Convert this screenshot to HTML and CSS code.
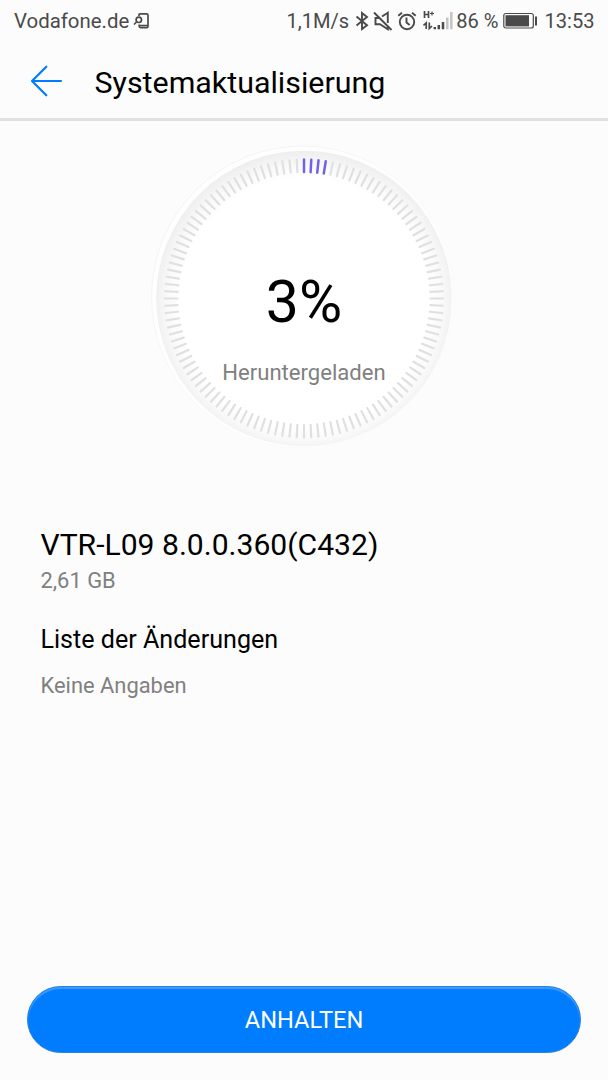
FILE: index.html
```
<!DOCTYPE html>
<html lang="de">
<head>
<meta charset="utf-8">
<title>Systemaktualisierung</title>
<link rel="stylesheet" href="styles.css">
</head>
<body>
<div class="screen">
  <div class="status">
    <div class="carrier">
      <span>Vodafone.de</span>
      <svg class="device-icon" width="17" height="18" viewBox="0 0 17 18"><path d="M6 4V2.800Q6 1.800 7 1.800H13.500Q15 1.800 15 3.200V14.200Q15 15.600 13.700 15.600H7.500Q6.200 15.600 6.200 14.300V12.500M6 13.500H15M1 12.500L3.500 10"/><circle cx="5.800" cy="7.800" r="2.700"/></svg>
    </div>
    <div class="indicators">
      <span class="speed">1,1M/s</span>
      <svg class="bluetooth" width="14" height="20" viewBox="0 0 14 20"><path d="M1.500 5.500L12 14.300L7 18V2L12 6L1.500 14.500"/></svg>
      <svg class="mute" width="20" height="20" viewBox="0 0 20 20"><path d="M1 1.500L18.500 19M6.500 7H2.500V13.300H7L14.800 18.200V15.500M9 5.500L14.800 1.800V12"/></svg>
      <svg class="alarm" width="20" height="20" viewBox="0 0 20 20"><circle cx="10" cy="11" r="7.200"/><path d="M9.500 6.500V11.500L12.700 14M1.300 4.800L5 1.700M15 1.700L18.700 4.800"/></svg>
      <svg class="signal" width="31" height="20" viewBox="0 0 31 20">
        <path class="hspa" d="M1.500 0V7M5.500 0V7M1.500 3.500H5.500"/>
        <path class="plus" d="M7 2.500H11M9 .5V4.500"/>
        <path class="hspa" d="M.5 14.500L3.200 12V18M6.300 11.500V17.500L9 15"/>
        <path class="bars" d="M11.800 16V18.200M15.800 14V18.200M20 11V18.200"/>
        <path class="bars off" d="M24.300 6.500V18.200M28.300 1V18.200"/>
      </svg>
      <span class="percent">86 %</span>
      <svg class="battery" width="35" height="18" viewBox="0 0 35 18"><rect class="shell" x=".8" y="1.500" width="29.500" height="14.500" rx="2"/><rect class="fill" x="2.500" y="3.200" width="23.500" height="11.200"/><rect class="fill" x="32" y="4.500" width="2" height="9"/></svg>
      <span class="clock">13:53</span>
    </div>
  </div>
  <header class="bar">
    <svg class="back" width="34" height="34" viewBox="0 0 34 34"><path d="M32 17H3.200M17.300 2.700L3 17L17.300 31.300"/></svg>
    <h1>Systemaktualisierung</h1>
  </header>
  <main>
    <section class="dial">
      <svg class="ring" viewBox="0 0 310 310" width="310" height="310">
        <defs>
          <radialGradient id="inset" gradientUnits="userSpaceOnUse" cx="156" cy="158.500" r="151.500">
            <stop offset=".82" stop-color="#fff"/><stop offset=".9" stop-color="#fafafa"/><stop offset="1" stop-color="#eee"/>
          </radialGradient>
          <linearGradient id="rim" x1="0" y1="0" x2="1" y2="1"><stop offset="0" stop-color="#f1f1f1"/><stop offset=".6" stop-color="#f9f9f9"/><stop offset="1" stop-color="#fcfcfc"/></linearGradient>
        </defs>
        <circle cx="153.500" cy="153" r="151" fill="#fefefe" stroke="url(#rim)"/>
        <circle cx="155" cy="154.500" r="147.800" fill="url(#inset)"/>
        <g id="ticks"></g>
      </svg>
      <div class="reading"><strong>3%</strong><span>Heruntergeladen</span></div>
    </section>
    <section class="details">
      <h2>VTR-L09 8.0.0.360(C432)</h2>
      <p class="size">2,61 GB</p>
      <h3>Liste der Änderungen</h3>
      <p class="changes">Keine Angaben</p>
    </section>
  </main>
  <footer><button type="button">ANHALTEN</button></footer>
</div>
<script src="ticks.js"></script>
</body>
</html>
```
FILE: styles.css
```
* { box-sizing: border-box; margin: 0; padding: 0; }
body { font-family: Roboto, "Liberation Sans", sans-serif; background: #fcfcfc; color: #000; }
svg { display: block; flex: none; fill: none; }
.screen { width: 608px; height: 1080px; display: flex; flex-direction: column; overflow: hidden; }
.status { height: 42px; padding: 0 13.500px 0 14px; display: flex; justify-content: space-between; align-items: center; font-size: 20.100px; line-height: 42px; color: #4a4a4a; white-space: nowrap; }
.carrier, .indicators { display: flex; align-items: center; }
.carrier { font-size: 20.400px; }
.device-icon { margin-left: 4px; stroke: #4a4a4a; stroke-width: 1.700; }
.bluetooth, .mute, .alarm { stroke: #4a4a4a; stroke-width: 1.900; }
.bluetooth { margin-left: 6px; }
.mute { margin-left: 4px; }
.alarm { margin-left: 4px; }
.signal { margin-left: 6px; }
.hspa { stroke: #4a4a4a; stroke-width: 1.700; }
.plus { stroke: #4a4a4a; stroke-width: 1.200; }
.bars { stroke: #4a4a4a; stroke-width: 2.500; }
.off { stroke: #c4c4c4; }
.percent { margin-left: 2px; }
.battery { margin-left: 5px; }
.shell { stroke: #4a4a4a; stroke-width: 1.200; }
.fill { fill: #4a4a4a; }
.clock { margin-left: 6px; }
.bar { height: 79px; padding-left: 29px; display: flex; align-items: center; border-bottom: 3px solid #e0e0e0; }
.back { margin-top: 1px; stroke: #007dff; stroke-width: 2.200; stroke-linecap: round; stroke-linejoin: round; }
h1 { margin-left: 31.500px; font-size: 30.400px; font-weight: 400; line-height: 40px; padding-top: 6px; }
main { flex: 1; }
.dial { display: grid; justify-content: center; padding-top: 23px; height: 373px; }
.ring, .reading { grid-area: 1 / 1; }
.tick { stroke: #e0e0e0; stroke-width: 2.200; stroke-linecap: round; }
.tick.done { stroke: #7262e8; stroke-width: 2.500; }
.reading { display: flex; flex-direction: column; align-items: center; padding-top: 122px; }
.reading strong { font-size: 59px; font-weight: 400; line-height: 72px; }
.reading span { font-size: 22.100px; line-height: 30px; color: #808080; margin-top: 19px; }
.details { padding: 31px 41px 0 40.500px; }
h2 { font-size: 30.100px; font-weight: 400; line-height: 40px; }
.size { font-size: 21.900px; line-height: 28px; color: #808080; margin-top: 2px; }
h3 { font-size: 25.100px; font-weight: 400; line-height: 34px; margin-top: 28px; }
.changes { font-size: 21.900px; line-height: 28px; color: #808080; margin-top: 15px; }
footer { padding: 0 27px 27px; }
button { display: block; width: 100%; height: 67.500px; border: 1px solid #2b83dc; border-radius: 34px; background: #007dff; box-shadow: inset 0 2px 1px #3f9cff; color: #fff; font: 23.600px/65px Roboto, "Liberation Sans", sans-serif; text-align: center; padding-top: 1px; }
```
FILE: ticks.js
```
const group = document.getElementById("ticks");
const total = 120;
const done = 4;
for (let i = 0; i < total; i++) {
  const line = document.createElementNS("http://www.w3.org/2000/svg", "line");
  line.setAttribute("x1", 155);
  line.setAttribute("x2", 155);
  line.setAttribute("y1", 15.5);
  line.setAttribute("y2", 28);
  line.setAttribute("transform", `rotate(${i * 360 / total} 155 154.5)`);
  line.setAttribute("class", i < done ? "tick done" : "tick");
  group.appendChild(line);
}
```
